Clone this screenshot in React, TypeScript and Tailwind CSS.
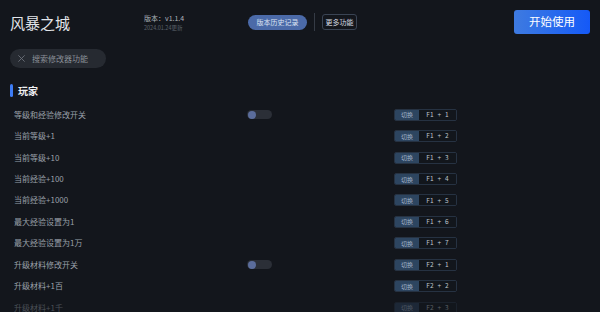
const rows = [
  { label: '等级和经验修改开关', toggle: true, key: 'F1 + 1' },
  { label: '当前等级+1', key: 'F1 + 2' },
  { label: '当前等级+10', key: 'F1 + 3' },
  { label: '当前经验+100', key: 'F1 + 4' },
  { label: '当前经验+1000', key: 'F1 + 5' },
  { label: '最大经验设置为1', key: 'F1 + 6' },
  { label: '最大经验设置为1万', key: 'F1 + 7' },
  { label: '升级材料修改开关', toggle: true, key: 'F2 + 1' },
  { label: '升级材料+1百', key: 'F2 + 2' },
  { label: '升级材料+1千', key: 'F2 + 3', faded: true },
];

function Toggle() {
  return (
    <div className="flex h-[9px] w-[25px] items-center rounded-full bg-[#2b2f37] px-[1px]">
      <div className="h-[8px] w-[8px] rounded-full bg-[#5b6d9c]" />
    </div>
  );
}

function HotkeyRow({ label, toggle, hotkey, faded }: { label: string; toggle?: boolean; hotkey: string; faded?: boolean }) {
  return (
    <div className={`flex h-[21.45px] items-center ${faded ? 'opacity-40' : ''}`}>
      <div className="w-[237px] pl-[4px] text-[8px] text-[#9aa0a9]">{label}</div>
      <div className="w-[147px]">{toggle && <Toggle />}</div>
      <div className="flex h-[12px] items-stretch overflow-hidden rounded-[2px] border border-[#263242]">
        <div className="flex w-[24px] items-center justify-center bg-[#2d4560] text-[6px] text-[#a6b8cc]">切换</div>
        <div className="flex w-[37px] items-center justify-center bg-[#12161c] text-[6.5px] tracking-[0.3px] whitespace-pre text-[#bfc5cc]">
          {hotkey.replace(/ \+ /, '  +  ')}
        </div>
      </div>
    </div>
  );
}

export default function App() {
  return (
    <div
      className="h-[312px] w-[600px] overflow-hidden bg-[#13161c] px-[10px] pt-[10px]"
      style={{ fontFamily: '"Noto Sans CJK SC", "Noto Sans", sans-serif' }}
    >
      <div className="flex h-[24px] items-center">
        <div className="w-[134px] text-[15px] leading-none text-[#e2e5ea]">风暴之城</div>
        <div className="flex w-[104px] flex-col pt-[1px]">
          <span className="text-[7px] leading-[9px] text-[#aeb3bb]">版本：v1.1.4</span>
          <span className="mt-[1px] text-[5.5px] leading-[8px] text-[#5c626b]">2024.01.24更新</span>
        </div>
        <button className="flex h-[15px] w-[59px] items-center justify-center rounded-full bg-[#4b6aa8] text-[7px] text-[#dde4f2]">
          版本历史记录
        </button>
        <div className="ml-[7px] h-[18px] w-px bg-[#353b45]" />
        <button className="ml-[7px] flex h-[16px] w-[35px] items-center justify-center rounded-[3px] border border-[#3a4454] text-[7px] text-[#d6dae0]">
          更多功能
        </button>
        <div className="flex-1" />
        <button className="flex h-[24px] w-[76px] items-center justify-center rounded-[3px] bg-gradient-to-r from-[#3e7ae0] to-[#1559f7] text-[11.5px] text-white">
          开始使用
        </button>
      </div>

      <div className="mt-[15px] flex h-[19px] w-[96px] items-center rounded-full bg-[#262a31] pl-[7px]">
        <svg width="9" height="9" viewBox="0 0 10 10" className="text-[#6b7079]">
          <path d="M1.5 1.5 L8.5 8.5 M8.5 1.5 L1.5 8.5" stroke="currentColor" strokeWidth="1" />
        </svg>
        <span className="ml-[6px] text-[8px] text-[#8b9098]">搜索修改器功能</span>
      </div>

      <div className="mt-[16px] flex h-[13px] items-center">
        <div className="h-[13px] w-[3px] rounded-full bg-[#3d7cf5]" />
        <span className="ml-[5px] text-[10px] font-bold text-[#eef0f3]">玩家</span>
      </div>

      <div className="mt-[7px]">
        {rows.map(r => (
          <HotkeyRow key={r.key} label={r.label} toggle={r.toggle} hotkey={r.key} faded={r.faded} />
        ))}
      </div>
    </div>
  );
}
